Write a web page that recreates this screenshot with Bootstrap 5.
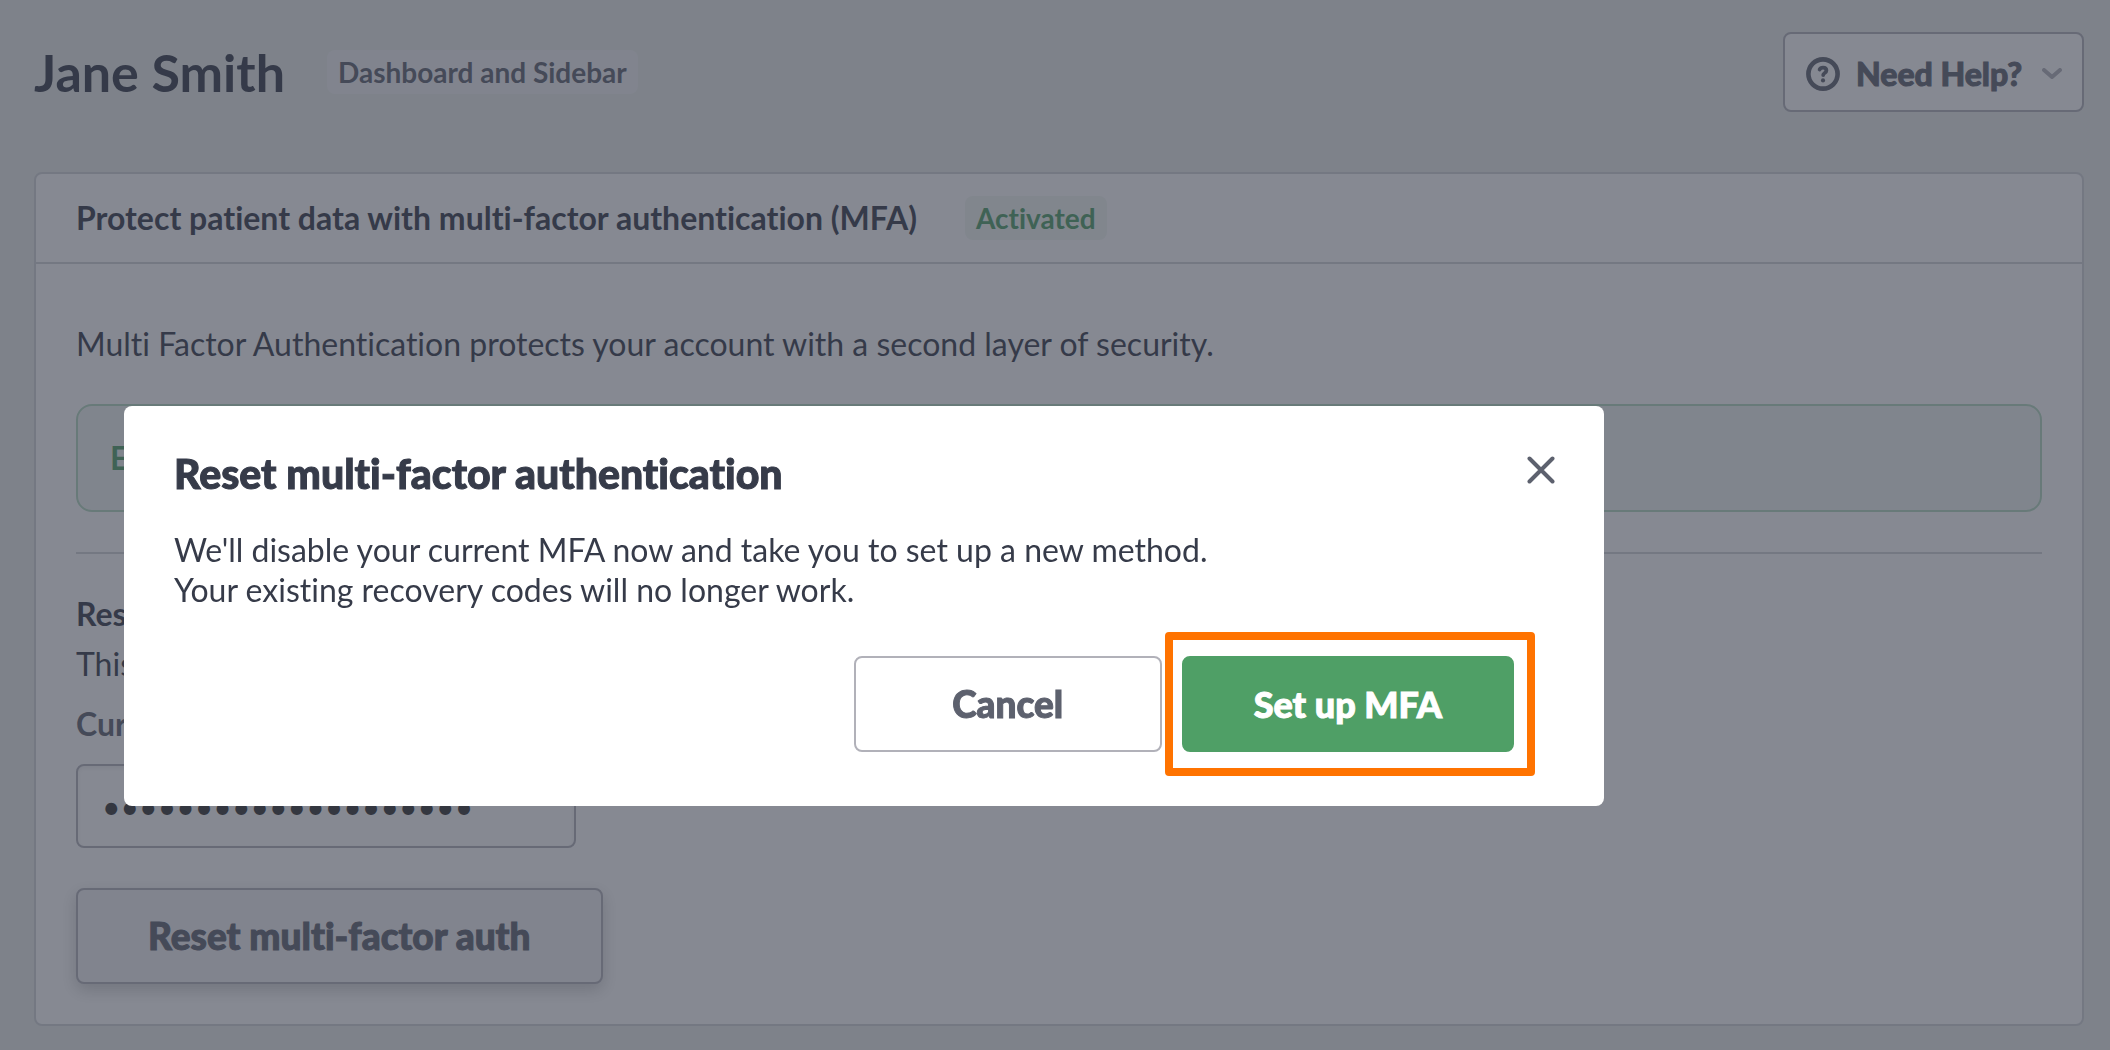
<!DOCTYPE html>
<html lang="en">
<head>
<meta charset="utf-8">
<meta name="viewport" content="width=device-width, initial-scale=1">
<title>Reset multi-factor authentication</title>
<link href="https://cdn.jsdelivr.net/npm/bootstrap@5.3.0/dist/css/bootstrap.min.css" rel="stylesheet">
<style>
  :root { --ink: #363b49; --ink-soft: #5d616e; --line: #b1b1b9; --line-soft: #d2d4d8; --green: #4f9f66; }
  body { background: #eaeeea; color: var(--ink); font-family: Lato, "Liberation Sans", sans-serif; font-size: 32px; line-height: 40px; }
  body, button { font-variant-ligatures: none; }
  .page-shell { padding: 32px 26px 24px 34px; }
  .page-head { height: 80px; margin-bottom: 60px; }
  .page-name { font-size: 52px; line-height: 64px; font-weight: 700; }
  .tag { font-size: 28px; line-height: 36px; font-weight: 700; margin-left: 42px; padding: 4px 11px; border-radius: 8px; background: #f3f3f6; color: var(--ink-soft); }
  .tag-on { margin-left: 48px; background: #f2f7f3; color: var(--green); }
  .help-btn { height: 80px; min-width: 301px; border: 2px solid var(--line); border-radius: 8px; background: #fff; color: var(--ink-soft); font-size: 32px; line-height: 40px; font-weight: 900; padding: 4px 20px 0 21px; }
  .help-btn span, .big-btn, .mfa-title { -webkit-text-stroke: 1px currentColor; }
  .panel { border: 2px solid var(--line-soft); border-radius: 8px; background: #fff; }
  .panel-head { padding: 22px 40px; border-bottom: 2px solid var(--line-soft); }
  .panel-title { font-size: 32px; line-height: 44px; font-weight: 700; }
  .panel-main { padding: 60px 40px 40px; }
  .notice { height: 108px; border: 2px solid #b4dac0; border-radius: 16px; background: #f1f6f3; color: var(--green); font-weight: 700; padding: 0 32px; margin: 40px 0; }
  .rule { border: 0; border-top: 2px solid var(--line-soft); opacity: 1; margin: 0 0 38px; }
  .reset-note { margin: 8px 0 20px; }
  .field { width: 500px; height: 84px; font-size: 32px; border: 2px solid var(--line); border-radius: 8px; color: #333; padding: 0 24px; margin: 20px 0 40px; box-shadow: inset 0 2px 4px #0001; }
  .field-label { color: var(--ink-soft); font-weight: 700; }
  .big-btn { height: 96px; min-width: 308px; font-size: 37px; line-height: 44px; font-weight: 900; padding: 0 70px; border: 2px solid var(--line); border-radius: 8px; background: #fff; color: var(--ink-soft); }
  .big-btn.lifted { background: #f2f2f4; box-shadow: 0 6px 16px #0003; }
  .big-btn.go { background: var(--green); border-color: var(--green); color: #fff; font-size: 36px; }
  .modal-backdrop { --bs-backdrop-bg: #363b49; --bs-backdrop-opacity: .6; }
  .mfa-dialog { max-width: 1480px; margin: 406px 124px 0; }
  .mfa-box { border: 0; border-radius: 8px; padding: 44px 49px 54px 50px; color: var(--ink); }
  .mfa-title { font-size: 41px; line-height: 48px; font-weight: 900; }
  .mfa-text { margin: 32px 0 46px; }
  .close-x { border: 0; background: none; padding: 6px 0 0; line-height: 0; color: var(--ink-soft); }
  .mfa-actions { gap: 20px; padding-right: 41px; }
  .marked::after { content: ""; position: absolute; inset: -24px -21px -24px -17px; border: 8px solid #ff7300; border-radius: 4px; pointer-events: none; }
</style>
<script src="https://cdn.jsdelivr.net/npm/bootstrap@5.3.0/dist/js/bootstrap.bundle.min.js"></script>
</head>
<body>
<div class="page-shell">
  <header class="page-head d-flex align-items-center justify-content-between">
    <div class="d-flex align-items-center">
      <h1 class="page-name mb-0">Jane Smith</h1>
      <span class="tag">Dashboard and Sidebar</span>
    </div>
    <button type="button" class="help-btn d-flex align-items-center">
      <svg width="34" height="34" viewBox="0 0 34 34" fill="none" stroke="currentColor" aria-hidden="true"><circle cx="17" cy="17" r="14.6" stroke-width="4.6"/><path d="M13.6 12.6c.5-1.2 1.8-2 3.4-2 2 0 3.4 1.2 3.4 3 0 2.4-3.2 2.3-3.2 4.4" stroke-width="3.8" stroke-linecap="round"/><circle cx="17" cy="23.4" r="2.1" fill="currentColor" stroke="none"/></svg>
      <span class="ms-3">Need Help?</span>
      <svg class="ms-auto" width="20" height="12" viewBox="0 0 20 12" fill="none" stroke="#b1b1b9" stroke-width="4" stroke-linecap="round" stroke-linejoin="round" aria-hidden="true"><path d="M2 2l8 7 8-7"/></svg>
    </button>
  </header>

  <main class="panel">
    <div class="panel-head d-flex align-items-center">
      <h2 class="panel-title mb-0">Protect patient data with multi-factor authentication (MFA)</h2>
      <span class="tag tag-on">Activated</span>
    </div>
    <div class="panel-main">
      <p class="mb-0">Multi Factor Authentication protects your account with a second layer of security.</p>
      <div class="notice d-flex align-items-center">E</div>
      <hr class="rule">
      <h3 class="panel-title mb-0">Res</h3>
      <p class="reset-note">This</p>
      <form>
        <label class="field-label d-block" for="current">Cur</label>
        <input class="field d-block" id="current" type="password" value="12345678901234567890">
        <button type="button" class="big-btn lifted">Reset multi-factor auth</button>
      </form>
    </div>
  </main>
</div>

<div class="modal-backdrop show"></div>
<div class="modal show d-block" tabindex="-1" role="dialog" aria-modal="true" aria-labelledby="mfaTitle">
  <div class="modal-dialog mfa-dialog">
    <div class="modal-content mfa-box">
      <div class="d-flex align-items-start justify-content-between">
        <h2 class="mfa-title mb-0" id="mfaTitle">Reset multi-factor authentication</h2>
        <button type="button" class="close-x" aria-label="Close"><svg width="28" height="28" viewBox="0 0 28 28" fill="none" stroke="currentColor" stroke-width="4" stroke-linecap="round" aria-hidden="true"><path d="M2.5 2.5l23 23M25.5 2.5l-23 23"/></svg></button>
      </div>
      <p class="mfa-text">We'll disable your current MFA now and take you to set up a new method.<br>Your existing recovery codes will no longer work.</p>
      <div class="mfa-actions d-flex justify-content-end">
        <button type="button" class="big-btn">Cancel</button>
        <span class="marked position-relative d-flex"><button type="button" class="big-btn go">Set up MFA</button></span>
      </div>
    </div>
  </div>
</div>
</body>
</html>
